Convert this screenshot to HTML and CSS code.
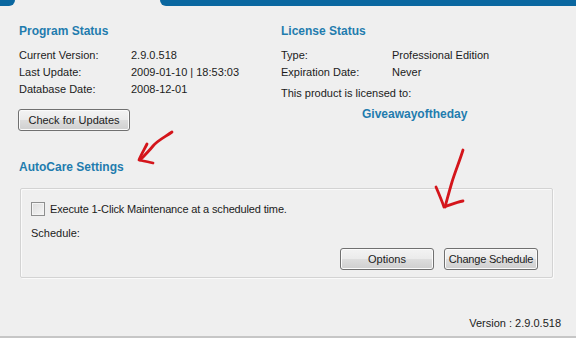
FILE: index.html
```html
<!DOCTYPE html>
<html>
<head>
<meta charset="utf-8">
<link rel="stylesheet" href="styles.css">
</head>
<body>
<div class="top"><div class="tl"></div><div class="tr"></div></div>
<div class="main">
  <section class="col col-left">
    <h2 class="heading">Program Status</h2>
    <div class="rows rows-left">
      <span>Current Version:</span><span>2.9.0.518</span>
      <span>Last Update:</span><span>2009-01-10 | 18:53:03</span>
      <span>Database Date:</span><span>2008-12-01</span>
    </div>
    <button class="btn btn-check">Check for Updates</button>
  </section>
  <section class="col col-right">
    <h2 class="heading">License Status</h2>
    <div class="rows rows-right">
      <span>Type:</span><span>Professional Edition</span>
      <span>Expiration Date:</span><span>Never</span>
    </div>
    <div class="licensed">This product is licensed to:</div>
    <div class="owner">Giveawayoftheday</div>
  </section>
</div>
<section class="autocare">
  <h2 class="heading">AutoCare Settings</h2>
  <div class="group">
    <label class="check-row"><span class="checkbox"></span><span class="check-label">Execute 1-Click Maintenance at a scheduled time.</span></label>
    <div class="schedule">Schedule:</div>
    <div class="actions">
      <button class="btn btn-act">Options</button>
      <button class="btn btn-act btn-tight">Change Schedule</button>
    </div>
  </div>
</section>
<footer class="footer">Version : 2.9.0.518</footer>
<svg class="arrows" width="576" height="338" viewBox="0 0 576 338">
  <g fill="none" stroke="#d4151b" stroke-width="2.8" stroke-linecap="round" stroke-linejoin="round">
    <path d="M172 132 C165 137 158 140 153 146 C149 151 144 156 140 160"/>
    <path d="M147 144 C144 150 141 155 139 160 C144 161 149 162 153 163"/>
    <path d="M463 150 C460 160 455 172 452 182 C449 192 447 200 445 207"/>
    <path d="M436 187 C439 194 442 201 444 207 C450 205 457 202 463 201"/>
  </g>
</svg>
</body>
</html>
```
FILE: styles.css
```css
* { box-sizing: border-box; }
html, body { margin: 0; padding: 0; }
body {
  width: 576px;
  height: 338px;
  background: #efefef;
  font-family: "Liberation Sans", Arial, sans-serif;
  font-size: 11px;
  color: #1b1b1b;
  display: flex;
  flex-direction: column;
  position: relative;
  overflow: hidden;
}
.top { height: 6px; display: flex; }
.tl { width: 15px; background: #0a67a0; border-bottom-right-radius: 6px; }
.tr { margin-left: 145px; flex: 1; background: #0a67a0; border-bottom-left-radius: 12px; }

.main {
  display: grid;
  grid-template-columns: 262px 1fr;
  padding: 18px 0 0 19px;
}
.heading {
  margin: 0;
  font-size: 12px;
  line-height: 14px;
  font-weight: bold;
  color: #1f7cae;
}
.rows {
  display: grid;
  margin-top: 9px;
  line-height: 17px;
}
.rows-left { grid-template-columns: 112px auto; }
.rows-right { grid-template-columns: 111px auto; }
.btn {
  font-family: inherit;
  font-size: 11px;
  color: #1b1b1b;
  height: 22px;
  padding: 0;
  border: 1px solid #707070;
  border-radius: 3px;
  background: linear-gradient(#f3f3f3 0%, #ebebeb 48%, #dddddd 52%, #cfcfcf 100%);
  box-shadow: inset 0 0 0 1px #fbfbfb;
}
.btn-check { width: 112px; margin-top: 11px; margin-left: -1px; display: block; }
.licensed { margin-top: 4px; line-height: 17px; }
.owner {
  margin-top: 4px;
  margin-left: 81px;
  line-height: 17px;
  font-size: 12px;
  font-weight: bold;
  color: #1f7cae;
}
.autocare { padding: 29px 0 0 19px; }
.group {
  margin: 14px 0 0 1px;
  width: 533px;
  border: 1px solid #d3d3d3;
  box-shadow: inset 1px 1px 0 #fafafa, 1px 1px 0 #fafafa;
  border-radius: 2px;
  padding: 13px 14px 7px 10px;
}
.check-row { display: flex; align-items: center; gap: 5px; line-height: 14px; }
.check-label { letter-spacing: -0.15px; }
.checkbox {
  width: 14px;
  height: 14px;
  border: 1px solid #8e8f8f;
  background: linear-gradient(135deg, #dcdcdc, #f6f6f6);
  box-shadow: inset 0 0 0 1px #f4f4f4;
}
.schedule { margin-top: 10px; line-height: 14px; }
.actions { display: flex; justify-content: flex-end; gap: 10px; margin-top: 8px; }
.btn-act { width: 94px; }
.btn-tight { letter-spacing: -0.2px; }
.footer {
  margin-top: auto;
  text-align: right;
  padding-right: 15px;
  line-height: 14px;
  height: 22px;
  border-bottom: 2px solid #c6c6c6;
}
.arrows { position: absolute; left: 0; top: 0; pointer-events: none; }
```
